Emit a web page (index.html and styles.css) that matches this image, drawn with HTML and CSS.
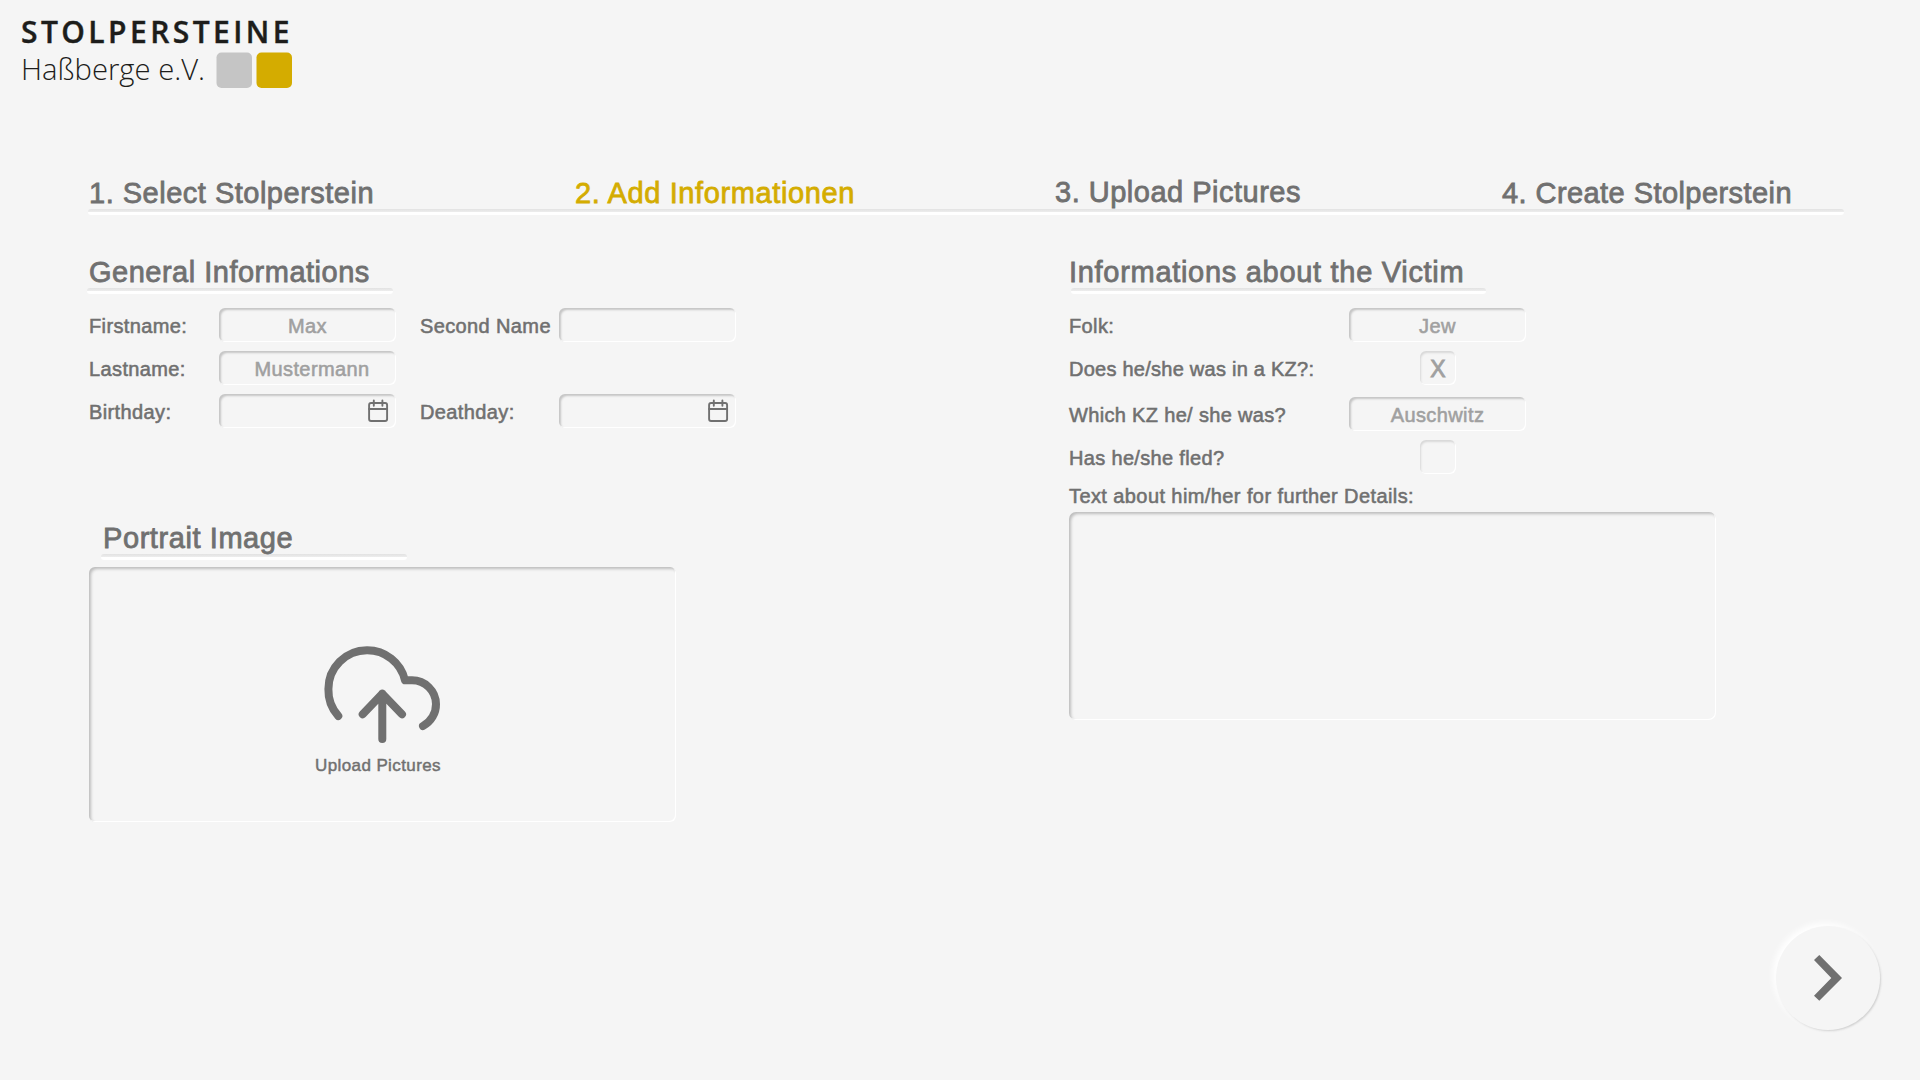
FILE: index.html
```html
<!DOCTYPE html>
<html lang="en">
<head>
<meta charset="utf-8">
<title>Stolpersteine Haßberge e.V.</title>
<link rel="stylesheet" href="styles.css">
</head>
<body>
<header class="header">
  <svg class="logo" width="300" height="100" viewBox="0 0 300 100">
    <text class="logo-name" x="21" y="43" textLength="268.5">STOLPERSTEINE</text>
    <text class="logo-place" x="21" y="79.5" textLength="184" lengthAdjust="spacingAndGlyphs">Haßberge e.V.</text>
    <rect x="216.5" y="52.5" width="35.5" height="35.5" rx="5" fill="#c5c5c5"/>
    <rect x="256.5" y="52.5" width="35.5" height="35.5" rx="5" fill="#d4ac00"/>
  </svg>
</header>
<main class="page">
  <nav class="steps">
    <span class="title step-select">1. Select Stolperstein</span>
    <span class="title step-add active">2. Add Informationen</span>
    <span class="title step-upload">3. Upload Pictures</span>
    <span class="title step-create">4. Create Stolperstein</span>
  </nav>
  <div class="rule"></div>
  <div class="columns">
    <div class="left">
      <section>
        <h2 class="title general-title">General Informations</h2>
        <div class="rule rule-general"></div>
        <div class="person">
          <span class="label firstname">Firstname:</span><span class="field">Max</span>
          <span class="label second-name">Second Name</span><span class="field"></span>
          <span class="label">Lastname:</span><span class="field field-lastname">Mustermann</span>
          <span></span><span></span>
          <span class="label">Birthday:</span>
          <span class="field field-date"><svg width="22" height="24" viewBox="0 0 22 24"><rect x="2.1" y="4" width="18" height="18" rx="2"/><path d="M2.1 10h18M6.8 1.5v5.2M15.4 1.5v5.2"/></svg></span>
          <span class="label second-name">Deathday:</span>
          <span class="field field-date"><svg width="22" height="24" viewBox="0 0 22 24"><rect x="2.1" y="4" width="18" height="18" rx="2"/><path d="M2.1 10h18M6.8 1.5v5.2M15.4 1.5v5.2"/></svg></span>
        </div>
      </section>
      <section class="portrait">
        <h2 class="title portrait-title">Portrait Image</h2>
        <div class="rule rule-portrait"></div>
        <div class="dropzone">
          <svg class="cloud" width="124" height="104" viewBox="320 642 124 104"><path d="M338.3 716A38.8 38.8 0 0 1 328.4 689A38.7 38.7 0 0 1 367 650.3A38.8 38.8 0 0 1 405 680.3H412A24 24 0 0 1 436 704A24.5 24.5 0 0 1 423 726M382.3 739V693.7M362.7 714.3L382.3 693.7L402 714.3"/></svg>
          <span class="upload-text">Upload Pictures</span>
        </div>
      </section>
    </div>
    <section class="right">
      <h2 class="title victim-title">Informations about the Victim</h2>
      <div class="rule rule-victim"></div>
      <div class="victim">
        <span class="label">Folk:</span><span class="field">Jew</span>
        <span class="label label-kz">Does he/she was in a KZ?:</span><span class="field check">X</span>
        <span class="label label-which row-gap">Which KZ he/ she was?</span><span class="field row-gap">Auschwitz</span>
        <span class="label label-which">Has he/she fled?</span><span class="field check"></span>
      </div>
      <span class="label details-label">Text about him/her for further Details:</span>
      <div class="details"></div>
    </section>
  </div>
</main>
<footer class="footer">
  <button class="next" aria-label="Next"><svg width="104" height="104" viewBox="0 0 104 104"><path d="M43.3 29L66 52L43.3 74.7L38 69.7L55.3 52L38 34Z" fill="#707070"/></svg></button>
</footer>
</body>
</html>
```
FILE: styles.css
```css
* { box-sizing: border-box; }
body {
  margin: 0;
  width: 1920px;
  height: 1080px;
  overflow: hidden;
  background: #f5f5f5;
  color: #707070;
  font-family: "Liberation Sans", Arial, sans-serif;
  display: flex;
  flex-direction: column;
}
.header { height: 176px; }
.logo { display: block; }
.logo-name { font: 600 30px "Open Sans", sans-serif; fill: #1d1d1b; stroke: #1d1d1b; stroke-width: .4px; }
.logo-place { font: 300 28.5px "Open Sans", sans-serif; fill: #1d1d1b; }
.page { padding-left: 88px; height: 750px; }
.steps { display: grid; grid-template-columns: 486px 480px 447px 400px; height: 33px; }
.title {
  margin: 0;
  padding-left: 1px;
  font-size: 29px;
  font-weight: 400;
  line-height: 34px;
  white-space: nowrap;
  letter-spacing: .5px;
  -webkit-text-stroke: .8px currentColor;
}
.active { color: #d4ac00; letter-spacing: .62px; }
.step-create { letter-spacing: .43px; }
.step-upload { margin-top: -1px; }
.rule {
  width: 1756px;
  height: 6px;
  border-radius: 3px;
  background: linear-gradient(#e2e2e2, #ececec 45%, #fff 55%, #fff);
}
.columns { display: grid; grid-template-columns: 980px 1fr; padding-top: 40px; }
.general-title, .victim-title { height: 33px; }
.victim-title { letter-spacing: .7px; }
.rule-general { width: 306px; margin-left: -1px; }
.rule-victim { width: 415px; margin-left: 3px; }
.rule-portrait { width: 306px; margin-left: 13px; }
.person {
  display: grid;
  grid-template-columns: 131px 177px 163px 177px;
  grid-auto-rows: 34px;
  row-gap: 9px;
  padding-top: 14px;
}
.label {
  padding: 1px 0 0 1px;
  font-size: 20px;
  line-height: 34px;
  letter-spacing: .38px;
  white-space: nowrap;
  -webkit-text-stroke: .55px currentColor;
}
.label-kz { letter-spacing: .25px; }
.label-which { letter-spacing: .33px; }
.second-name { padding-left: 24px; }
.field {
  display: flex;
  align-items: center;
  justify-content: center;
  height: 34px;
  padding-top: 2px;
  border-radius: 6px;
  color: #a0a0a0;
  font-size: 20px;
  letter-spacing: .4px;
  -webkit-text-stroke: .55px currentColor;
  box-shadow: inset -1px -1px 0 #fff, inset 2px 2px 2px #c6c6c6;
}
.field-lastname { padding-left: 9px; }
.field-date { justify-content: flex-end; padding: 0 7px 0 0; }
.field-date svg { fill: none; stroke: #707070; stroke-width: 1.9; stroke-linecap: round; }
.portrait { padding-top: 93px; }
.portrait-title { height: 33px; padding-left: 15px; letter-spacing: .58px; }
.dropzone {
  display: flex;
  flex-direction: column;
  align-items: center;
  width: 587px;
  height: 255px;
  margin: 7px 0 0 1px;
  padding-top: 75px;
  border-radius: 6px;
  box-shadow: inset -1px -1px 0 #fff, inset 2px 2px 3px #bdbdbd;
}
.cloud { margin-right: 1px; fill: none; stroke: #707070; stroke-width: 8; stroke-linecap: round; stroke-linejoin: round; }
.upload-text {
  margin: 10px 9px 0 0;
  font-size: 17px;
  line-height: 20px;
  letter-spacing: .4px;
  -webkit-text-stroke: .45px currentColor;
}
.victim {
  display: grid;
  grid-template-columns: 281px 177px;
  grid-template-rows: 34px 34px 37px 34px;
  row-gap: 9px;
  padding-top: 14px;
}
.check {
  justify-self: center;
  width: 36px;
  padding: 2px 0 0 1px;
  font-size: 23px;
  -webkit-text-stroke: .9px currentColor;
  box-shadow: inset -1px -1px 0 #fff, inset 1px 2px 2px #d8d8d8;
}
.row-gap { margin-top: 3px; }
.details-label { display: block; height: 38px; padding-top: 5px; letter-spacing: .41px; }
.details {
  width: 647px;
  height: 208px;
  margin-left: 1px;
  border-radius: 7px;
  box-shadow: inset -1px -1px 0 #fff, inset 2px 2px 3px #bdbdbd;
}
.footer { display: flex; justify-content: flex-end; padding-right: 40px; }
.next {
  width: 104px;
  height: 104px;
  padding: 0;
  border: 0;
  border-radius: 50%;
  background: #f5f5f5;
  box-shadow: -3px -3px 6px #fff, 1px 1px 2px #ccc;
}
.next svg { display: block; }
```
